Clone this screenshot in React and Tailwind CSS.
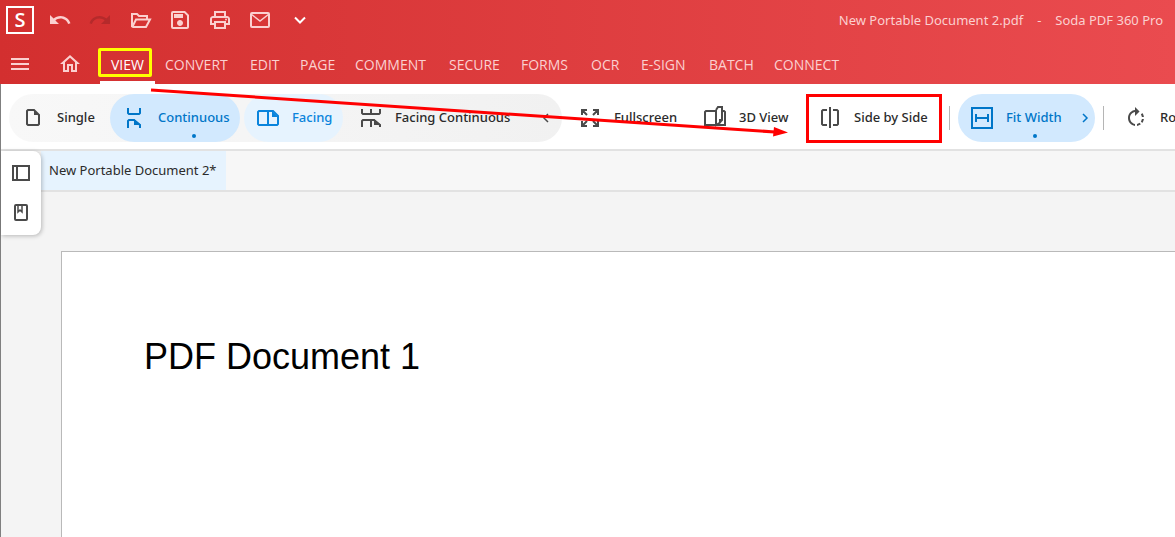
import React from "react";
import {
  MdMenu,
  MdOutlineHome,
  MdOutlinePrint,
  MdOutlineSave,
  MdRedo,
  MdRotateRight,
  MdUndo,
} from "react-icons/md";

const menuItems = [
  { name: "CONVERT", width: "w-[65px]" },
  { name: "EDIT", width: "w-[30px]" },
  { name: "PAGE", width: "w-[35px]" },
  { name: "COMMENT", width: "w-[74px]" },
  { name: "SECURE", width: "w-[52px]" },
  { name: "FORMS", width: "w-[50px]" },
  { name: "OCR", width: "w-[30px]" },
  { name: "E-SIGN", width: "w-[48px]" },
  { name: "BATCH", width: "w-[45px]" },
  { name: "CONNECT", width: "w-[68px]" },
];

export default function App() {
  return (
    <div className="relative flex min-h-screen flex-col overflow-hidden bg-[#f4f4f4] font-['Noto_Sans','Open_Sans',sans-serif] text-[13px] text-[#2b2b2b]">
      <header className="bg-linear-to-r from-[#d32f2f] to-[#ea4b4f] text-[#fbd0d0]">
        <TitleBar />
        <MenuBar />
      </header>
      <div className="flex flex-grow flex-col border-l border-[#7f7f7f]">
        <Toolbar />
        <main className="flex flex-grow">
          <SidePanel />
          <div className="flex min-w-0 flex-grow flex-col">
            <div className="flex h-[41px] border-b-2 border-[#e2e2e2] bg-[#f7f7f7]">
              <button className="w-[185px] bg-[#e6f3fe] pl-2 text-left whitespace-nowrap">
                New Portable Document 2*
              </button>
            </div>
            <article className="mt-[59px] ml-5 flex-grow border-t border-l border-[#b9b9b9] bg-white px-[82px] pt-20 font-['Liberation_Sans',Arial,sans-serif] text-black">
              <h1 className="text-4xl leading-[50px]">PDF Document 1</h1>
            </article>
          </div>
        </main>
      </div>
      <Arrow />
    </div>
  );
}

function TitleBar() {
  return (
    <div className="flex h-10 items-center pr-3 pl-1.5">
      <div className="flex size-7 items-center justify-center border-2 border-white font-['Open_Sans',sans-serif] text-xl leading-none font-semibold text-white">
        S
      </div>
      <div className="ml-3.5 flex gap-4">
        <IconButton label="Undo">
          <MdUndo size={24} />
        </IconButton>
        <IconButton label="Redo">
          <MdRedo size={24} className="text-[#b52a2b]" />
        </IconButton>
        <IconButton label="Open">
          <Icon>
            <path d="M4 19V6h5l2 2h8v3M4 19.500l4-8h14l-4 7.500H4" />
          </Icon>
        </IconButton>
        <IconButton label="Save">
          <MdOutlineSave size={24} />
        </IconButton>
        <IconButton label="Print">
          <MdOutlinePrint size={24} />
        </IconButton>
        <IconButton label="Email">
          <Icon>
            <rect x="3" y="5" width="18" height="14" rx="1" />
            <path d="M3 6l9 7 9-7" strokeWidth="1.5" />
          </Icon>
        </IconButton>
        <IconButton label="More">
          <Icon className="text-white">
            <path d="M7 9.500l5 5 5-5" />
          </Icon>
        </IconButton>
      </div>
      <div className="ml-auto flex gap-3.5 pt-0.5 whitespace-nowrap">
        <span>New Portable Document 2.pdf</span>
        <span>-</span>
        <span>Soda PDF 360 Pro</span>
      </div>
    </div>
  );
}

function MenuBar() {
  return (
    <nav className="flex h-11 items-stretch pl-2 font-['Open_Sans','Noto_Sans',sans-serif] text-sm">
      <button aria-label="Menu" className="flex items-center pt-1">
        <MdMenu size={24} />
      </button>
      <a href="#home" aria-label="Home" className="ml-[26px] flex items-center pt-1">
        <MdOutlineHome size={24} />
      </a>
      <a
        href="#view"
        className="relative ml-[18px] flex w-[55px] items-center justify-center border-b-3 border-white pt-[9px] text-white"
      >
        VIEW
        <span className="absolute top-2 -left-0.5 h-[29px] w-[54px] rounded-xs border-3 border-[#ffff00]" />
      </a>
      <div className="ml-2.5 flex gap-5 pt-1.5">
        {menuItems.map(({ name, width }) => (
          <a
            key={name}
            href={`#${name.toLowerCase()}`}
            className={`flex items-center whitespace-nowrap ${width}`}
          >
            {name}
          </a>
        ))}
      </div>
    </nav>
  );
}

function Toolbar() {
  return (
    <div className="flex h-[67px] items-center overflow-hidden border-b-2 border-[#e2e2e2] bg-white pt-0.5 pl-2 font-medium">
      <div className="flex shrink-0 rounded-3xl bg-linear-to-r from-[#f8f8f8] to-[#f1f1f1]">
        <Tool label="Single" className="w-[101px]">
          <path d="M13 4H7L6 5v13l1 1h10l1-1V9z" />
          <path d="M13 4v5h5z" fill="currentColor" stroke="none" />
        </Tool>
        <Tool
          label="Continuous"
          active
          iconColor="text-[#0076c8]"
          className="w-[130px]"
        >
          <path d="M6 2v5l1 1h10l1-1V2M6 22v-7l1-1h5l6 5v3" />
          <path d="M12 13v6h7z" fill="currentColor" stroke="none" />
        </Tool>
        <Tool
          label="Facing"
          iconColor="text-[#0a84dc]"
          className="ml-1 w-[99px] bg-[#e6f3fe] text-[#0a84dc]"
        >
          <path d="M17 5H3L2 6v12l1 1h18l1-1v-8zM12 5v14" />
          <path d="M16 5v6h6z" fill="currentColor" stroke="none" />
        </Tool>
        <Tool label="Facing Continuous" className="ml-1 w-[183px]">
          <path d="M3 3v4l1 1h16l1-1V3M12 3v5M3 21v-6l1-1h11l6 5v2M12 14v7" />
          <path d="M15 13v6h7z" fill="currentColor" stroke="none" />
        </Tool>
        <button
          aria-label="Collapse"
          className="flex w-8 items-center justify-center"
        >
          <Chevron className="rotate-180 text-[#4a4a4a]" />
        </button>
      </div>
      <Tool label="Fullscreen" className="ml-1 w-[125px]">
        <path d="M4 9V4h5M4 4l5 5M15 4h5v5M20 4l-5 5M4 15v5h5M4 20l5-5M20 15v5h-5M20 20l-5-5" />
      </Tool>
      <Tool label="3D View" className="w-[115px]">
        <path d="M12 5H3L2 6v13h10M19 5h2l1 1v13h-9M13 4l2-3h4v13l-2 2v-3M13 4v15l5-3" />
      </Tool>
      <Tool label="Side by Side" marked className="w-[136px]">
        <path d="M9 4H5L4 5v13l1 1h4M15 4h4l1 1v13l-1 1h-4M12 1v21" />
      </Tool>
      <Divider className="ml-[7px]" />
      <div className="relative ml-2 flex shrink-0 rounded-3xl bg-[#d2e9fe] text-[#0076c8]">
        <Tool
          label="Fit Width"
          iconColor="text-[#0076c8]"
          className="w-[115px]"
        >
          <path d="M2 2h20v20H2zM6 8v8M18 8v8M6 12h12" />
        </Tool>
        <button
          aria-label="Fit options"
          className="flex w-[22px] items-center pl-1.5"
        >
          <Chevron />
        </button>
        <Dot className="left-[75px]" />
      </div>
      <Divider className="ml-2" />
      <button className="ml-2 flex h-12 shrink-0 items-center gap-3 px-3">
        <MdRotateRight size={24} className="text-[#4a4a4a]" />
        Rotate
      </button>
    </div>
  );
}

function SidePanel() {
  return (
    <aside className="z-10 flex h-[84px] w-10 shrink-0 flex-col items-center gap-4 rounded-r-lg bg-white pt-2.5 text-[#4a4a4a] shadow-[1px_1px_4px_rgba(0,0,0,0.25)]">
      <IconButton label="Panels">
        <Icon>
          <path d="M4 5h16v14H4zM8 5v14" />
        </Icon>
      </IconButton>
      <IconButton label="Bookmarks">
        <Icon>
          <rect x="6" y="4" width="12" height="15" rx="1" />
          <path d="M9 5v6l2-2 2 2V5" strokeWidth="1.5" />
        </Icon>
      </IconButton>
    </aside>
  );
}

function Tool({
  label,
  active,
  marked,
  iconColor = "text-[#4a4a4a]",
  className = "",
  children,
}) {
  return (
    <button
      className={`relative flex h-12 shrink-0 items-center gap-3 rounded-3xl pl-3 whitespace-nowrap ${
        active ? "bg-[#d2e9fe] text-[#0076c8]" : ""
      } ${className}`}
    >
      <Icon className={iconColor}>{children}</Icon>
      {label}
      {active && <Dot className="left-[82px]" />}
      {marked && (
        <span className="absolute inset-x-0 top-0 h-[49px] border-3 border-[#ff0000]" />
      )}
    </button>
  );
}

function Icon({ className = "", children }) {
  return (
    <svg
      viewBox="0 0 24 24"
      className={`size-6 shrink-0 ${className}`}
      fill="none"
      stroke="currentColor"
      strokeWidth="2"
      aria-hidden="true"
    >
      {children}
    </svg>
  );
}

function IconButton({ label, children }) {
  return (
    <button aria-label={label} className="flex items-center">
      {children}
    </button>
  );
}

function Chevron({ className = "" }) {
  return (
    <svg
      viewBox="0 0 12 12"
      className={`size-3 ${className}`}
      fill="none"
      stroke="currentColor"
      strokeWidth="1.5"
      aria-hidden="true"
    >
      <path d="M4 2l4 4-4 4" />
    </svg>
  );
}

function Dot({ className }) {
  return (
    <span
      className={`absolute bottom-1 size-1 rounded-full bg-[#0076c8] ${className}`}
    />
  );
}

function Divider({ className }) {
  return <span className={`h-6 w-px shrink-0 bg-[#b5b5b5] ${className}`} />;
}

// Pointer from the VIEW tab to the Side by Side tool
function Arrow() {
  return (
    <svg
      viewBox="0 0 640 52"
      className="pointer-events-none absolute top-[86px] left-[150px] z-20 h-[52px] w-[640px]"
      aria-hidden="true"
    >
      <path d="M1 4l624 42" stroke="#ff0000" strokeWidth="3" />
      <path d="M624 41l14 5.500-15 4z" fill="#ff0000" />
    </svg>
  );
}
